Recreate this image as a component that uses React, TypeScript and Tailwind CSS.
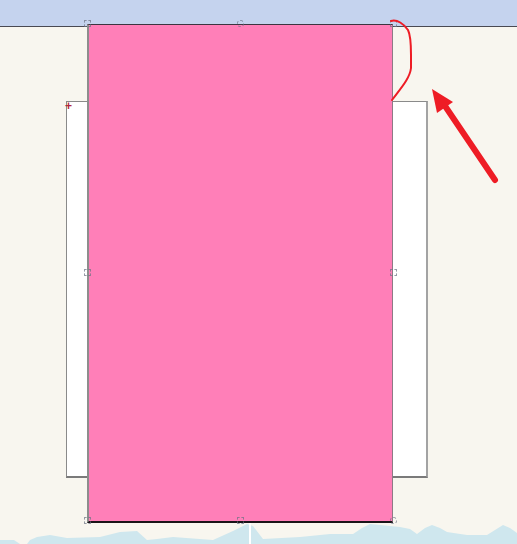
import React from 'react'

const Handle = ({ round = false, hidden = false }: { round?: boolean; hidden?: boolean }) => (
  <div
    className={`w-[7px] h-[7px] border border-dashed ${hidden ? 'border-transparent' : 'border-gray-500/70'} ${round ? 'rounded-full' : ''}`}
  />
)

const HandleRow = ({ roundMid = false, roundEnd = false, noMid = false }: { roundMid?: boolean; roundEnd?: boolean; noMid?: boolean }) => (
  <div className="flex justify-between">
    <Handle />
    <Handle round={roundMid} hidden={noMid} />
    <Handle round={roundEnd} />
  </div>
)

export default function App() {
  return (
    <div className="relative w-[517px] h-[544px] overflow-hidden bg-[#f8f6ef] font-['Liberation_Sans',sans-serif]">
      {/* top band */}
      <div className="h-[27px] bg-[#c5d3ee] border-b border-[#4a4a52]" />

      {/* wave at the bottom */}
      <svg className="absolute left-0 bottom-0" width="517" height="30" viewBox="0 514 517 30">
        <path
          d="M0 540 L14 540 L20 544 L27 544 L30 540 L37 537 L50 535 L67 538 L100 537 L120 532 L137 531 L147 540 L157 539 L173 537 L213 540 L233 531 L247 524 L253 526 L263 539 L300 537 L330 534 L353 534 L362 528 L370 524 L400 527 L410 529 L417 534 L425 528 L432 525 L440 528 L447 532 L467 535 L487 535 L495 530 L503 525 L510 528 L517 533 L517 544 L0 544 Z"
          fill="#cfe7ee"
        />
        <line x1="250" y1="523" x2="250" y2="544" stroke="#ffffff" strokeWidth="2" />
      </svg>

      {/* white page behind */}
      <div className="absolute left-[66px] top-[101px] w-[362px] h-[377px] bg-white border border-[#8a8a8a] border-r-2 border-r-[#a3a3a3] border-b-2 border-b-[#7a7a7a]" />
      <span className="absolute left-[65px] top-[100px] text-[12px] leading-none font-bold text-[#b0263c]">+</span>

      {/* pink shape with selection handles */}
      <div className="absolute left-[87px] top-[24px] w-[306px] h-[499px] bg-[#ff7fb8] border-l-2 border-r border-t border-b-2 border-l-[#8d8d8d] border-r-[#8d7a86] border-t-[#3c3440] border-b-[#1a1418]">
        <div className="-mx-[5px] -my-[5px] h-[calc(100%+8px)] flex flex-col justify-between">
          <HandleRow roundMid />
          <HandleRow noMid />
          <HandleRow roundEnd />
        </div>
      </div>

      {/* red annotation */}
      <svg className="absolute left-0 top-0 pointer-events-none" width="517" height="544">
        <path
          d="M391 21 C397 19 404 24 408 30 C411 36 411 45 411 55 L411 68 C410 78 401 88 392 100"
          fill="none"
          stroke="#ee1c25"
          strokeWidth="2"
          strokeLinecap="round"
        />
        <line x1="495" y1="180" x2="443" y2="103" stroke="#ee1c25" strokeWidth="6" strokeLinecap="round" />
        <polygon points="432,89 453,102 437,113" fill="#ee1c25" />
      </svg>
    </div>
  )
}
